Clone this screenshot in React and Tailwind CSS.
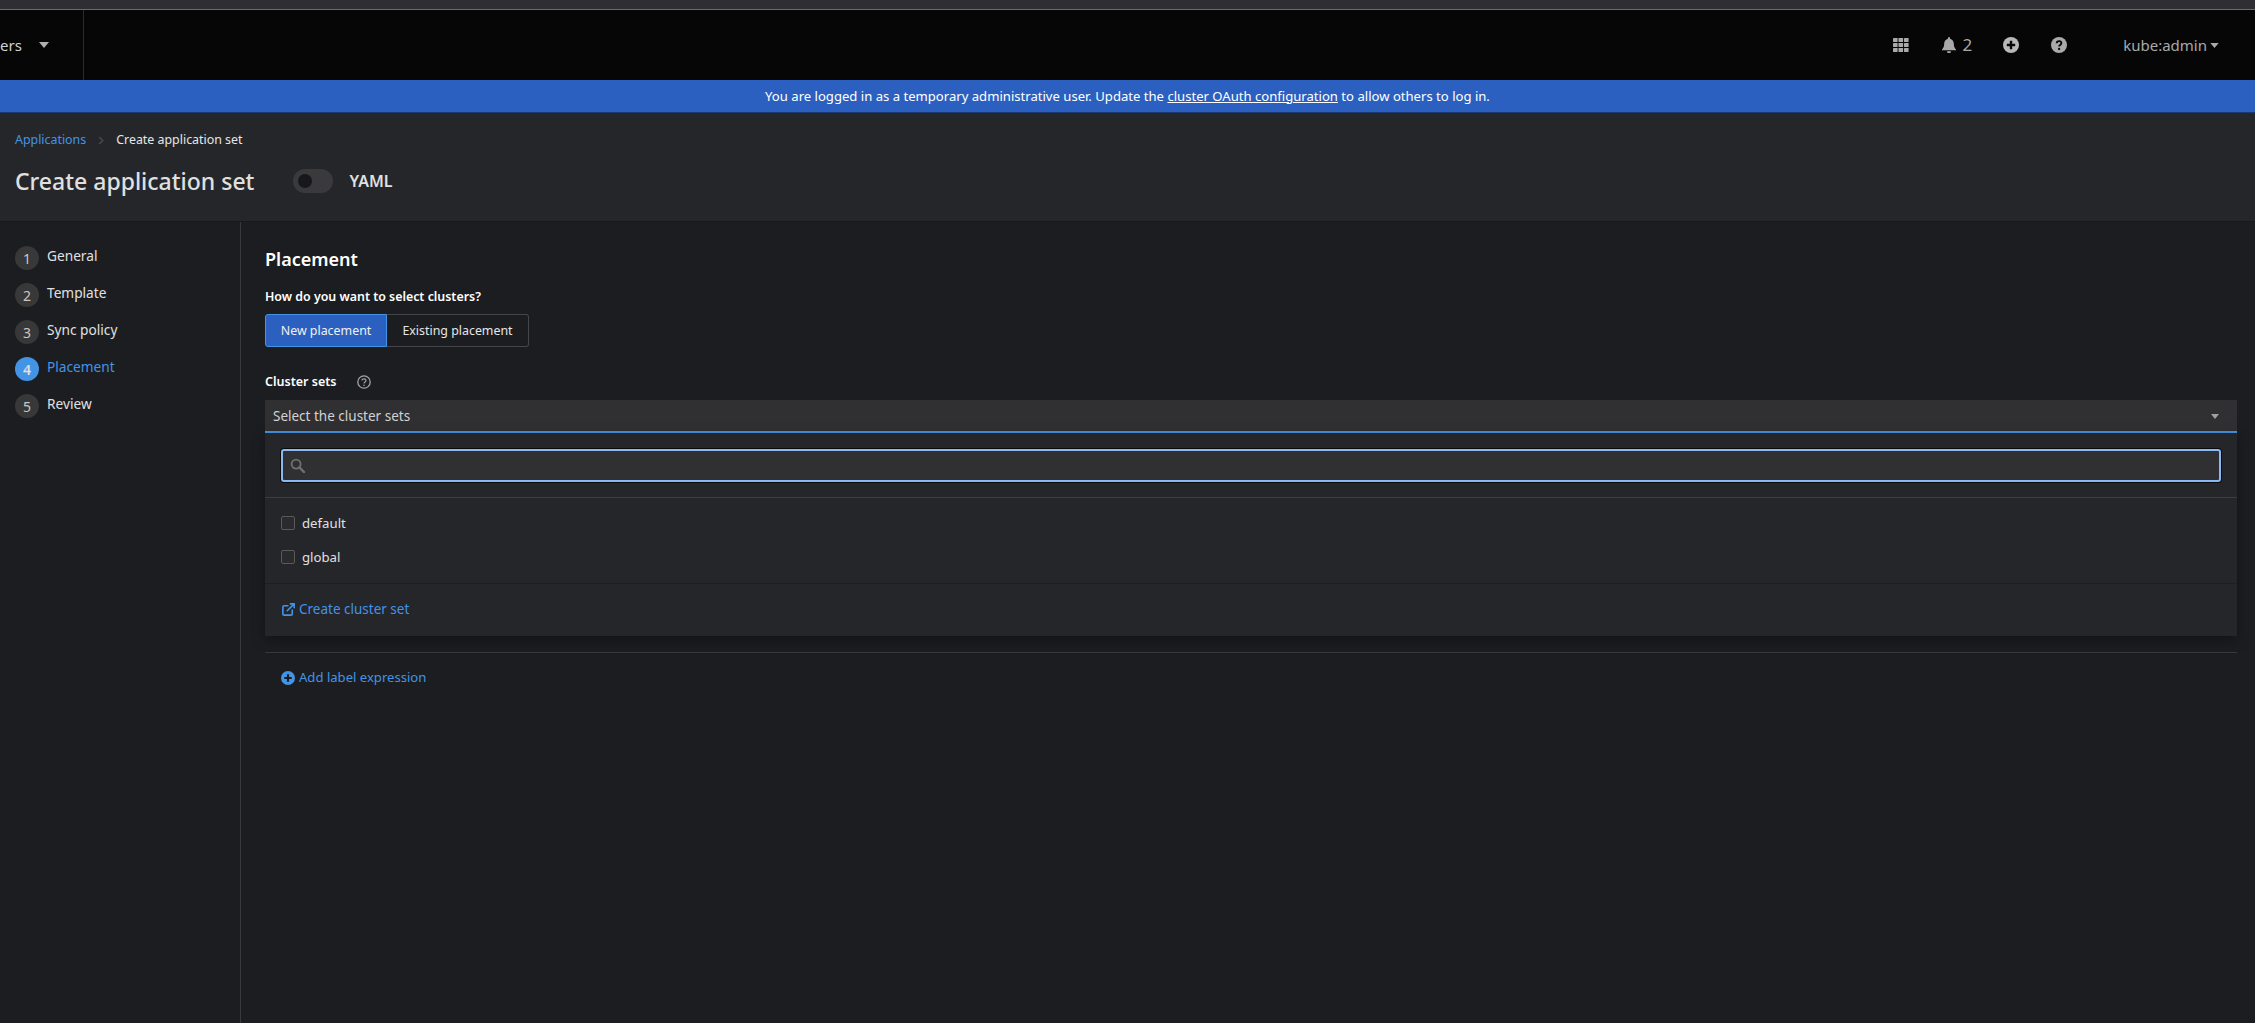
import React from "react";
import { ExternalLink } from "lucide-react";

const font = "font-['Noto_Sans','Inter',sans-serif]";

function Caret({ className = "" }) {
  return (
    <svg viewBox="0 0 10 6" className={className} fill="currentColor">
      <path d="M0 0h10L5 6z" />
    </svg>
  );
}

function Grid() {
  return (
    <svg viewBox="0 0 16 14" className="w-4 h-[14px]" fill="currentColor">
      {[0, 5.5, 11].map((x) =>
        [0, 5, 10].map((y) => <rect key={`${x}-${y}`} x={x} y={y} width="4.6" height="4" rx="0.4" />)
      )}
    </svg>
  );
}

function Bell() {
  return (
    <svg viewBox="0 0 14 16" className="w-[14px] h-4" fill="currentColor">
      <path d="M7 0a1 1 0 0 1 1 1v.7c2.300.5 3.800 2.500 3.800 4.800 0 3 .7 4.200 2.200 5.900v.9H0v-.9c1.500-1.700 2.200-2.900 2.200-5.900C2.200 4.200 3.700 2.200 6 1.700V1a1 1 0 0 1 1-1zM5 14.200h4a2 2 0 0 1-4 0z" />
    </svg>
  );
}

function PlusCircle({ className = "", cut = "#060607" }) {
  return (
    <svg viewBox="0 0 16 16" className={className}>
      <circle cx="8" cy="8" r="8" fill="currentColor" />
      <path d="M8 3.800v8.400M3.800 8h8.400" stroke={cut} strokeWidth="2.400" />
    </svg>
  );
}

function HelpSolid() {
  return (
    <svg viewBox="0 0 16 16" className="w-4 h-4">
      <circle cx="8" cy="8" r="8" fill="currentColor" />
      <path d="M5.700 6.200c0-1.300 1-2.100 2.400-2.100s2.300.8 2.300 2c0 1.900-2.300 1.800-2.300 3.400" fill="none" stroke="#060607" strokeWidth="1.800" />
      <circle cx="8.100" cy="12" r="1.150" fill="#060607" />
    </svg>
  );
}

function HelpOutline() {
  return (
    <svg viewBox="0 0 14 14" className="w-[14px] h-[14px]" fill="none" stroke="#a3a3a3">
      <circle cx="7" cy="7" r="6.200" strokeWidth="1.300" />
      <path d="M5 5.500c0-1.100.9-1.700 2-1.700s2 .6 2 1.600C9 7 7 7 7 8.500" strokeWidth="1.200" />
      <circle cx="7" cy="10.300" r="0.800" fill="#a3a3a3" stroke="none" />
    </svg>
  );
}

function SearchIcon() {
  return (
    <svg viewBox="0 0 16 16" className="h-[15px] w-[15px] text-[#6e6e6e]" fill="none" stroke="currentColor">
      <circle cx="6.500" cy="6.500" r="4.800" strokeWidth="2" />
      <path d="M10 10l5 5" strokeWidth="2.600" strokeLinecap="round" />
    </svg>
  );
}

const steps = ["General", "Template", "Sync policy", "Placement", "Review"];

function Step({ n, label, active }) {
  return (
    <div className="flex h-[37px] items-start">
      <div
        className={`flex h-6 w-6 items-center justify-center rounded-full text-[14px] ${
          active ? "bg-[#4394e5] text-[#e0e0e0] font-semibold" : "bg-[#383838] text-[#c7c7c7]"
        }`}
      >
        {n}
      </div>
      <span className={`ml-[8px] -mt-[1px] text-[13.700px] leading-[21px] ${active ? "text-[#4394e5]" : "text-[#e0e0e0]"}`}>
        {label}
      </span>
    </div>
  );
}

function Option({ label }) {
  return (
    <div className="flex h-[34px] items-center pl-4">
      <span className="h-[14px] w-[14px] rounded-[2px] border border-[#5a5a5a] bg-[#2b2b2d]" />
      <span className="ml-[7px] mt-[1px] text-[13.200px] text-[#e0e0e0]">{label}</span>
    </div>
  );
}

export default function App() {
  return (
    <div className={`${font} flex h-[1023px] w-[2255px] flex-col overflow-hidden bg-[#1b1d21]`}>
      <div className="h-[10px] shrink-0 border-b border-[#6a6a6a] bg-[#2f2f33]" />

      <header className="flex h-[70px] shrink-0 items-stretch bg-[#060607] text-[#a9a9a9]">
        <div className="flex w-[84px] items-center border-r border-[#2a2a2c]">
          <span className="text-[15px] text-[#d2d2d2]">ers</span>
          <Caret className="ml-[17px] h-[6px] w-[10px] text-[#b0b0b0]" />
        </div>
        <div className="flex flex-1 items-center justify-end pr-[36px]">
          <Grid />
          <div className="ml-[33px] flex items-center">
            <Bell />
            <span className="ml-[6px] text-[17px]">2</span>
          </div>
          <span className="ml-[31px]"><PlusCircle className="h-4 w-4 text-[#b8b8b8]" /></span>
          <span className="ml-[32px]"><HelpSolid /></span>
          <div className="ml-[56px] flex items-center">
            <span className="text-[15px]">kube:admin</span>
            <Caret className="ml-[3px] h-[5px] w-[9px]" />
          </div>
        </div>
      </header>

      <div className="flex h-[33px] shrink-0 items-center justify-center border-b border-[#1a3a75] bg-[#2b60c1] pt-[1px] text-[13.100px] text-white">
        <span>
          You are logged in as a temporary administrative user. Update the{" "}
          <span className="underline">cluster OAuth configuration</span> to allow others to log in.
        </span>
      </div>

      <section className="h-[109px] shrink-0 border-b border-[#17181b] bg-[#25262a] pl-[15px]">
        <div className="flex items-center pt-[17px] text-[12.400px] leading-[20px]">
          <span className="text-[#4394e5]">Applications</span>
          <svg viewBox="0 0 6 10" className="mx-[12px] h-[9px] w-[6px] text-[#4a4a4a]" fill="none" stroke="currentColor" strokeWidth="1.600">
            <path d="M1 1l4 4-4 4" />
          </svg>
          <span className="text-[#e6e6e6]">Create application set</span>
        </div>
        <div className="mt-[14px] flex items-center">
          <h1 className="text-[23px] font-medium leading-[34px] text-[#e0e0e0]">Create application set</h1>
          <div className="ml-[39px] flex h-6 w-10 items-center rounded-full bg-[#3a3a3c] pl-[5px]">
            <span className="h-[14px] w-[14px] rounded-full bg-[#17181b]" />
          </div>
          <span className="ml-[16px] text-[16px] font-semibold text-[#e0e0e0]">YAML</span>
        </div>
      </section>

      <main className="flex min-h-0 flex-1">
        <nav className="w-[241px] shrink-0 border-r border-[#38393c] pl-[15px] pt-[24px]">
          {steps.map((s, i) => (
            <Step key={s} n={i + 1} label={s} active={i === 3} />
          ))}
        </nav>

        <div className="flex-1 pl-[24px] pr-[18px] pt-[23px]">
          <h2 className="text-[18px] font-semibold leading-[28px] text-white">Placement</h2>
          <p className="mt-[13px] text-[12.400px] font-semibold leading-[21px] text-white">How do you want to select clusters?</p>

          <div className="mt-[7px] flex h-[33px] w-[264px] text-[12.400px]">
            <div className="flex w-[122px] items-center justify-center rounded-l-[3px] border border-[#4394e5] bg-[#2b60c1] pt-[1px] text-[#f0f0f0]">
              New placement
            </div>
            <div className="flex flex-1 items-center justify-center rounded-r-[3px] border border-l-0 border-[#45464a] pt-[1px] text-[#e6e6e6]">
              Existing placement
            </div>
          </div>

          <div className="mt-[24px] flex h-[21px] items-center pt-[1px] text-[12.500px] font-semibold text-white">
            <span>Cluster sets</span>
            <span className="ml-[21px]"><HelpOutline /></span>
          </div>

          <div className="mt-[8px] flex h-[33px] items-center justify-between border-b-2 border-[#4394e5] bg-[#303032] pl-[8px] pr-[18px] pt-[1px]">
            <span className="text-[13.500px] text-[#d2d2d2]">Select the cluster sets</span>
            <Caret className="h-[5px] w-2 text-[#a0a0a0]" />
          </div>

          <div className="h-[203px] bg-[#25262a] shadow-[0_4px_12px_rgba(0,0,0,0.35)]">
            <div className="h-[65px] border-b border-[#3c3d40] px-4 pt-[16px]">
              <div className="flex h-[33px] items-center rounded-[3px] border-2 border-[#8ab8f5] bg-[#303032] pl-[7px] shadow-[0_0_0_1px_#0a0a0b]">
                <SearchIcon />
              </div>
            </div>
            <div className="h-[85px] pt-[8px]">
              <Option label="default" />
              <Option label="global" />
            </div>
            <div className="flex h-[52px] items-center border-t border-[#1d1e21] pl-4 text-[13.500px] text-[#4394e5]">
              <ExternalLink size={15} strokeWidth={2.600} />
              <span className="ml-[3px]">Create cluster set</span>
            </div>
          </div>

          <div className="mt-4 flex h-[50px] items-center border-t border-[#38393c] pl-4 text-[13.100px] text-[#4394e5]">
            <PlusCircle className="h-[14px] w-[14px] text-[#4394e5]" cut="#1b1d21" />
            <span className="ml-[4px]">Add label expression</span>
          </div>
        </div>
      </main>
    </div>
  );
}
